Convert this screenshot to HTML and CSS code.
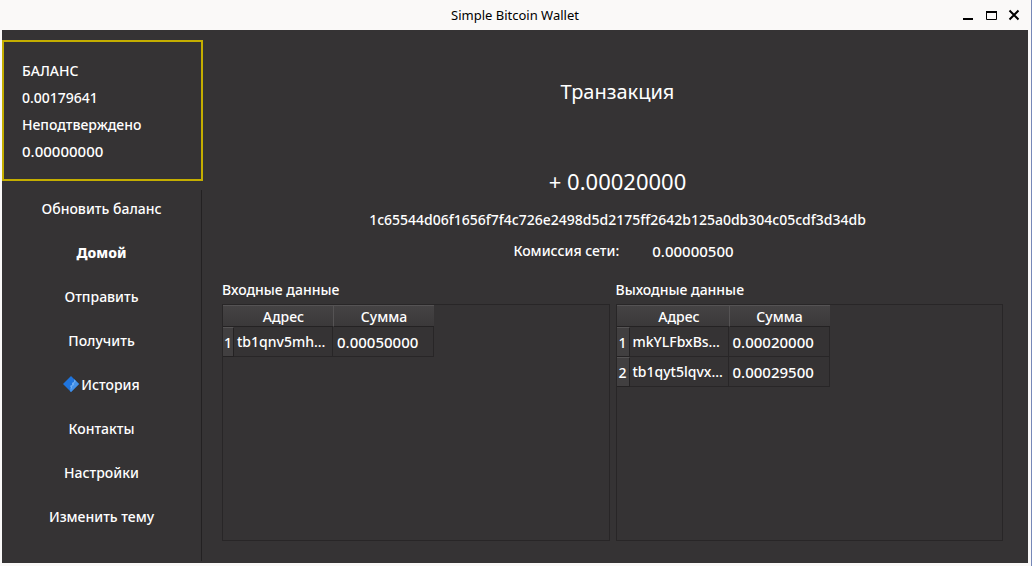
FILE: index.html
```html
<!DOCTYPE html>
<html lang="ru">
<head>
<meta charset="utf-8">
<title>Simple Bitcoin Wallet</title>
<link rel="stylesheet" href="styles.css">
</head>
<body>
<div class="window">
  <header class="titlebar">
    <h1 class="window-title">Simple Bitcoin Wallet</h1>
    <div class="window-controls">
      <button type="button" class="control" aria-label="Свернуть"><svg width="12" height="12" viewBox="0 0 12 12"><path d="M1 10h10" stroke="#000" stroke-width="2"/></svg></button>
      <button type="button" class="control" aria-label="Развернуть"><svg width="12" height="12" viewBox="0 0 12 12"><path d="M1.500 3v7.500h10V3" fill="none" stroke="#000"/><path d="M1 3h11" stroke="#000" stroke-width="2"/></svg></button>
      <button type="button" class="control" aria-label="Закрыть"><svg width="12" height="12" viewBox="0 0 12 12"><path d="M1.500 1.500l9 9M10.500 1.500l-9 9" stroke="#000" stroke-width="2"/></svg></button>
    </div>
  </header>
  <div class="app">
    <aside class="sidebar">
      <section class="balance">
        <p>БАЛАНС</p>
        <p>0.00179641</p>
        <p>Неподтверждено</p>
        <p class="number">0.00000000</p>
      </section>
      <nav class="menu">
        <button type="button" class="menu-item">Обновить баланс</button>
        <button type="button" class="menu-item menu-item-active">Домой</button>
        <button type="button" class="menu-item">Отправить</button>
        <button type="button" class="menu-item">Получить</button>
        <button type="button" class="menu-item"><svg class="diamond" width="16" height="16" viewBox="0 0 16 16"><path d="M8 0l8 8-8 8-8-8z" fill="#1f74dc"/><path d="M11 3l5 5-8 8-1-1 1-3-1-2 2-1V7l2-1z" fill="#4592e8"/><path d="M11 4l2 1-2 2v2l-2 1v2l-2 2 1-3-1-1 2-1V7l2-1z" fill="#6cabf2"/></svg>История</button>
        <button type="button" class="menu-item">Контакты</button>
        <button type="button" class="menu-item">Настройки</button>
        <button type="button" class="menu-item">Изменить тему</button>
      </nav>
    </aside>
    <main class="content">
      <div class="summary">
        <h2 class="heading">Транзакция</h2>
        <p class="amount">+ 0.00020000</p>
        <p class="hash">1c65544d06f1656f7f4c726e2498d5d2175ff2642b125a0db304c05cdf3d34db</p>
        <p class="fee"><span>Комиссия сети:</span><span class="number">0.00000500</span></p>
      </div>
      <div class="panels">
        <section class="panel">
          <h3 class="panel-title" id="inputs">Входные данные</h3>
          <div class="panel-body">
            <table class="grid grid-narrow" aria-labelledby="inputs">
              <thead><tr><td class="corner"></td><th class="address">Адрес</th><th>Сумма</th></tr></thead>
              <tbody><tr><th>1</th><td>tb1qnv5mh…</td><td class="number">0.00050000</td></tr></tbody>
            </table>
          </div>
        </section>
        <section class="panel">
          <h3 class="panel-title" id="outputs">Выходные данные</h3>
          <div class="panel-body">
            <table class="grid" aria-labelledby="outputs">
              <thead><tr><td class="corner"></td><th class="address">Адрес</th><th>Сумма</th></tr></thead>
              <tbody>
                <tr><th>1</th><td>mkYLFbxBs…</td><td class="number">0.00020000</td></tr>
                <tr><th>2</th><td>tb1qyt5lqvx…</td><td class="number">0.00029500</td></tr>
              </tbody>
            </table>
          </div>
        </section>
      </div>
    </main>
  </div>
</div>
</body>
</html>
```
FILE: styles.css
```css
* { box-sizing: border-box; }

body {
  margin: 0;
  font-family: "Noto Sans", "Open Sans", sans-serif;
  font-size: 14px;
  font-weight: 500;
  color: #fff;
}

h1, h2, h3, p { margin: 0; font-weight: inherit; }

button {
  font: inherit;
  color: inherit;
  background: none;
  border: 0;
  padding: 0;
}

.number { font-size: 15px; }

.window {
  display: flex;
  flex-direction: column;
  min-height: 100vh;
  padding: 0 3px 3px 2px;
  background: #faf9f8;
  border-right: 1px solid #7688b8;
}

.titlebar {
  display: grid;
  grid-template-columns: 1fr auto 1fr;
  align-items: center;
  height: 30px;
  color: #000;
}

.window-title { grid-column: 2; font-size: 13px; font-weight: 400; }

.window-controls {
  display: flex;
  justify-content: flex-end;
  gap: 11px;
  padding-right: 8px;
}

.control { display: flex; }

.app {
  flex: 1;
  display: grid;
  grid-template-columns: 201px 1fr;
  background: #353334;
}

.sidebar {
  display: flex;
  flex-direction: column;
  gap: 9px;
  padding: 10px 0 2px;
}

.balance {
  padding: 15px 18px 14px;
  border: 2px solid #c4ae00;
  line-height: 27px;
}

.menu {
  flex: 1;
  display: flex;
  flex-direction: column;
  gap: 10px;
  margin-right: 1px;
  padding-top: 1px;
  border-right: 1px solid #232122;
}

.menu-item {
  display: flex;
  align-items: center;
  justify-content: center;
  gap: 2px;
  height: 34px;
}

.menu-item-active { font-weight: 800; }

.content {
  display: flex;
  flex-direction: column;
  padding: 0 25px 22px 19px;
}

.summary { padding-left: 10px; text-align: center; }

.heading {
  margin-top: 48px;
  font-size: 20px;
  font-weight: 400;
  line-height: 28px;
}

.amount {
  margin-top: 61px;
  font-size: 22px;
  font-weight: 400;
  line-height: 28px;
}

.hash {
  margin-top: 14px;
  line-height: 22px;
}

.fee {
  display: flex;
  justify-content: center;
  gap: 33px;
  margin-top: 9px;
  padding-left: 12px;
  line-height: 22px;
}

.panels {
  flex: 1;
  display: grid;
  grid-template-columns: 1fr 1fr;
  gap: 6px;
  margin-top: 17px;
}

.panel { display: flex; flex-direction: column; }

.panel-title { font-size: 14px; line-height: 22px; padding-bottom: 3px; }

.panel-body { flex: 1; border: 1px solid #282627; }

.grid {
  table-layout: fixed;
  width: 213px;
  border-collapse: separate;
  border-spacing: 0;
}

.grid th, .grid td { padding: 0; font-weight: inherit; }

.grid thead th, .corner {
  height: 22px;
  background: linear-gradient(#454344, #3b393a);
  border-top: 1px solid #555354;
  border-bottom: 1px solid #242223;
}

.grid thead th + th { border-left: 1px solid #555354; }

.corner { width: 13px; }
.address { width: 99px; }

.grid-narrow { width: 211px; }
.grid-narrow .corner { width: 11px; }

.grid tbody th {
  background: #413f40;
  border-top: 1px solid #555354;
  border-right: 1px solid #242223;
  border-bottom: 1px solid #242223;
}

.grid tbody td {
  height: 30px;
  padding-left: 3px;
  border-right: 1px solid #282627;
  border-bottom: 1px solid #282627;
  line-height: 20px;
  white-space: nowrap;
}

.grid td.number { padding-left: 4px; }
```
